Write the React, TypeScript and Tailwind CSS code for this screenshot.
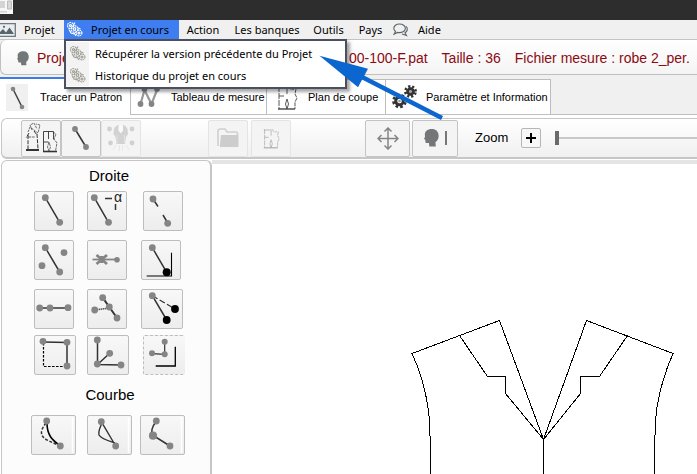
import type { ReactNode } from "react";
import { clsx } from "clsx";

const GREY = "#858585";

type Point = [number, number];

function Dots({ at, r = 3.4, fill = GREY }: { at: Point[]; r?: number; fill?: string }) {
  return (
    <>
      {at.map(([x, y]) => (
        <circle key={`${x}-${y}`} cx={x} cy={y} r={r} fill={fill} stroke="none" />
      ))}
    </>
  );
}

type Tool = {
  label: string;
  className: string;
  icon: ReactNode;
};

const LINE_TOOLS: Tool[][] = [
  [
    {
      label: "Droite par deux points",
      className: "w-10",
      icon: (
        <>
          <path d="M11.3 6.7 25.7 31.3" />
          <Dots at={[[11.3, 6.7], [25.7, 31.3]]} />
        </>
      ),
    },
    {
      label: "Droite avec angle",
      className: "w-10",
      icon: (
        <>
          <path d="M7.3 6.7 21.5 31.3M18 7.5h7M28.5 13v6" />
          <Dots at={[[7.3, 6.7], [21.5, 31.3]]} />
          <text x="27" y="11" fontSize="14" fill="#222" stroke="none" className="font-['Liberation_Sans',sans-serif]">
            α
          </text>
        </>
      ),
    },
    {
      label: "Droite interrompue",
      className: "ml-0.5 w-10",
      icon: (
        <>
          <path d="m10 8 5 7.5M20 24l4.7 8" />
          <Dots at={[[10, 8], [24.7, 32.3]]} />
        </>
      ),
    },
  ],
  [
    {
      label: "Parallèle",
      className: "w-10",
      icon: (
        <>
          <path d="M11.3 7.7 25.7 32" />
          <Dots at={[[11.3, 7.7], [25.7, 32], [30, 12.7], [8, 25.7]]} />
        </>
      ),
    },
    {
      label: "Supprimer un point",
      className: "w-10",
      icon: (
        <>
          <path d="M5.5 19.5H30" stroke={GREY} strokeWidth="1.8" />
          <path d="m9.5 15 10.5 9M9.5 24 20 15M14.7 16v7" stroke={GREY} strokeWidth="2.8" />
          <Dots at={[[30, 19.7]]} r={2.8} />
        </>
      ),
    },
    {
      label: "Perpendiculaire",
      className: "w-10",
      icon: (
        <>
          <path d="M11.3 7.7 25.7 32.3" />
          <path d="M30.5 12.7V36H5.7" stroke="#000" strokeWidth="1.1" />
          <Dots at={[[11.3, 7.7]]} />
          <Dots at={[[25.7, 32.3]]} r={4} fill="#000" />
        </>
      ),
    },
  ],
  [
    {
      label: "Point sur droite",
      className: "w-10",
      icon: (
        <>
          <path d="M5.7 19H34" />
          <Dots at={[[5.7, 19], [16, 19], [34, 18.7]]} />
        </>
      ),
    },
    {
      label: "Intersection",
      className: "w-10",
      icon: (
        <>
          <path d="m15.7 8.7 6.6 9.3L30 29" strokeWidth="2" />
          <path d="M7.7 21 22.3 19" strokeDasharray="1.2 0.8" />
          <Dots at={[[15.7, 8.7], [22.3, 18], [7.7, 21], [30, 29]]} />
        </>
      ),
    },
    {
      label: "Rotation",
      className: "w-[42px]",
      icon: (
        <>
          <path d="M11.3 6.7 25.7 31" />
          <path d="M11.3 6.7 34 20" strokeDasharray="6 2.5" strokeWidth="1.2" />
          <Dots at={[[11.3, 6.7]]} />
          <Dots at={[[25.7, 31], [34, 20]]} r={3.9} fill="#000" />
        </>
      ),
    },
  ],
  [
    {
      label: "Rectangle",
      className: "w-[42px]",
      icon: (
        <>
          <path d="m9 7 24 .5V31" />
          <path d="M9.5 8v23.5H33" stroke="#000" strokeWidth="1.2" strokeDasharray="2.6 1.4" />
          <Dots at={[[9, 6.3], [33, 7.3], [33, 31]]} />
        </>
      ),
    },
    {
      label: "Bissectrice",
      className: "w-[42px]",
      icon: (
        <>
          <path d="M10.5 5v24.5L34 30M10.5 29.5 22.7 18.3" />
          <Dots at={[[10.3, 5], [10.3, 29], [22.7, 18.3], [34, 30]]} />
        </>
      ),
    },
    {
      label: "Angle droit",
      className: "ml-0.5 w-[42px] border-dashed border-r-transparent",
      icon: (
        <>
          <path d="M21.7 6.7v12.6L9 18.7" strokeWidth="1.2" />
          <path d="M32.3 11.7V31H12.7" stroke="#000" strokeWidth="1.3" />
          <Dots at={[[9, 18.3], [21.7, 6.7], [21.7, 19.3]]} r={3} />
        </>
      ),
    },
  ],
];

const CURVE_TOOLS: Tool[] = [
  {
    label: "Modifier une courbe",
    className: "w-[45px]",
    icon: (
      <>
        <path d="M41.5 2v36" stroke="#fff" />
        <path d="M16 8c0 12 5 17 13 22.5" stroke="#000" strokeWidth="1.6" />
        <path d="M15 8c-7 9-5 13 0 16.5L29 31" strokeDasharray="3 1.6" />
        <Dots at={[[15.7, 6], [29.3, 31]]} />
      </>
    ),
  },
  {
    label: "Courbe par corde",
    className: "w-[45px]",
    icon: (
      <>
        <path d="M41.5 2v36" stroke="#fff" />
        <path d="m14.3 6.7 14.4 24.3M15 8c-2 5-4 8-3 12 2 4 10 6 16 8" strokeWidth="1.4" />
        <Dots at={[[14.3, 6.7], [28.7, 31]]} />
      </>
    ),
  },
  {
    label: "Courbe par trois points",
    className: "w-[45px]",
    icon: (
      <>
        <path d="M41.5 2v36" stroke="#fff" />
        <path d="M16.3 6c-5 7-5 10-4 14L30 31" />
        <Dots at={[[16.3, 6], [30, 31]]} />
        <Dots at={[[13, 20.7]]} r={4.1} />
      </>
    ),
  },
];

function ToolButton({ tool }: { tool: Tool }) {
  return (
    <button
      type="button"
      aria-label={tool.label}
      className={clsx(
        "flex h-10 items-start rounded-xs border border-[#bdbdbd] bg-linear-to-b from-[#f8f8f8] to-[#ededed]",
        tool.className,
      )}
    >
      <svg
        width="42"
        height="38"
        viewBox="1 1 42 38"
        fill="none"
        stroke="#333"
        strokeWidth="1.5"
        className="shrink-0 overflow-visible"
        aria-hidden
      >
        {tool.icon}
      </svg>
    </button>
  );
}

// chain of small linked rings used by the "Projet en cours" entries
function ChainIcon({ color }: { color: string }) {
  return (
    <svg width="17" height="17" viewBox="0 0 17 17" fill="none" stroke={color} strokeWidth="1.2" className="shrink-0" aria-hidden>
      <circle cx="4.5" cy="4.5" r="3" strokeDasharray="1.8 .7" />
      <circle cx="4.5" cy="4.5" r="1" />
      <circle cx="8.5" cy="8" r="3.4" strokeDasharray="2 .6" />
      <circle cx="8.5" cy="8" r="1.3" />
      <circle cx="13" cy="12" r="2.9" strokeDasharray="1.6 .7" />
      <circle cx="13" cy="12" r="1" />
      <path d="M9 1.5 7.5 4M3 8.5l2 3.5 3 1M8 12l2 3M12 7l2.5 1" />
    </svg>
  );
}

function PictureIcon() {
  return (
    <svg width="16" height="14" viewBox="0 0 16 14" className="shrink-0" aria-hidden>
      <path d="M0 .7h15.3v12.6H0" fill="#e9edf0" stroke="#6d777c" strokeWidth="1.3" />
      <path d="M0 11V9l3-3 3 3.5 3.5-5L14 11Z" fill="#56646b" />
      <circle cx="4" cy="3.8" r="1.1" fill="#56646b" />
    </svg>
  );
}

function ChatIcon() {
  return (
    <svg width="15" height="14" viewBox="0 0 15 14" fill="none" stroke="#59646b" strokeWidth="1.1" aria-hidden>
      <path d="M11.5 10c1.5-.5 2.8-2 2.8-4 0-1-.5-2-1.2-2.7M12 10l1.5 2.5L9 11" />
      <path
        d="M6.5 1C3.3 1 .8 2.9.8 5.3c0 1.3.7 2.4 1.7 3.2L1.2 11l3.5-1.6c3.9.8 7.7-1 7.7-4.1C12.4 2.9 9.7 1 6.5 1Z"
        fill="#f0f0f0"
      />
    </svg>
  );
}

function HeadIcon({ width, height }: { width: number; height: number }) {
  return (
    <svg width={width} height={height} viewBox="0 0 14 17" fill="#737779" className="shrink-0" aria-hidden>
      <path d="M7.5 0C3 0 .5 2.4.8 5.7L1 7.2 0 9.5l1.2.6.2 2.5c.5.8 1.8.7 3.2.5L5 16.5h6l-.3-4C13 10.8 14 8.5 13.6 5.5 13.2 2 11 0 7.500 0Z" />
    </svg>
  );
}

function SegmentIcon() {
  return (
    <svg width="22" height="27" viewBox="0 0 22 27" aria-hidden>
      <path d="M0 0h22v27H0Z" fill="#f0f0f0" />
      <path d="m7 5 9 18" stroke="#444" strokeWidth="1.5" />
      <Dots at={[[7, 5], [16, 23]]} r={2.3} />
    </svg>
  );
}

function ZigzagIcon() {
  return (
    <svg width="24" height="24" viewBox="0 0 24 24" fill="none" stroke="#999" strokeWidth="2.2" aria-hidden>
      <path d="M3.5 19 7.5 5l7 14L20 5" />
      <Dots at={[[3.5, 19], [7.5, 4], [14.5, 19], [20, 4]]} r={2.9} />
    </svg>
  );
}

function PieceIcon({ width, height, stroke }: { width: number; height: number; stroke: string }) {
  return (
    <svg width={width} height={height} viewBox="0 0 21 25" fill="none" stroke={stroke} aria-hidden>
      <path d="M2 1v23" strokeWidth=".9" strokeDasharray="6 1" />
      <path d="M1 24h17" strokeWidth="1.4" />
      <path d="M1 2h8M10 1v8M2 11h5" strokeWidth=".9" />
      <path d="M12 1c0 3 2 4 5 3M19 4l-1 5 2 4-2 4v7" strokeWidth=".9" strokeDasharray="4 .8" />
      <path d="m10 14-1.5 5 1.5 5 1.5-5Z" strokeWidth=".9" />
    </svg>
  );
}

function Gear({ x, y, r }: { x: number; y: number; r: number }) {
  return (
    <g transform={`translate(${x} ${y}) rotate(12)`}>
      <circle r={r} fill="none" stroke="#333" strokeWidth="2.8" strokeDasharray={`${r * 0.42} ${r * 0.365}`} />
      <circle r={r - 2.2} fill="none" stroke="#333" strokeWidth="3" />
      <circle r="1.3" fill="#999" />
    </g>
  );
}

function GearsIcon() {
  return (
    <svg width="26" height="24" viewBox="0 0 26 24" className="shrink-0" aria-hidden>
      <Gear x={7.5} y={16} r={6} />
      <Gear x={18.5} y={6.5} r={5} />
    </svg>
  );
}

function PatternsIcon() {
  return (
    <svg width="34" height="32" viewBox="0 0 34 32" fill="none" stroke="#333" aria-hidden>
      <path d="M4 10 6 5l4 3 4 3 2-8-4-1M8 8 6 3l4-2 3 6" strokeWidth=".7" strokeDasharray="2.5 .8" />
      <path d="M4 13v14M5 11l-3 5M13 12l1 15M10 9l3 4" strokeWidth="1" strokeDasharray="4 1.2" />
      <path d="M2 28h13" strokeWidth="2" />
      <path d="M19 29.5h14" strokeWidth="1.6" />
      <path d="M19.5 29V9.5h10v8M24.5 9v8M19.5 20h5" strokeWidth=".9" />
      <path d="m29 10 3 2-2 5 3 4-1.5 8M25 20l-1.5 5L25 29l1.5-4L25 20M4 15h7" strokeWidth=".7" strokeDasharray="3 .7" />
    </svg>
  );
}

function ToolbarSegmentIcon() {
  return (
    <svg width="24" height="28" viewBox="0 0 24 28" aria-hidden>
      <path d="m6 5 11 18" stroke="#333" strokeWidth="1.5" />
      <Dots at={[[6, 5], [17, 23]]} r={2.9} />
    </svg>
  );
}

function BodiceIcon() {
  return (
    <svg width="28" height="32" viewBox="0 0 28 32" fill="#d2d2d2" aria-hidden>
      <path d="M7 7q1-3 4-4h5.500q3 1 4 4l.5 5-2 3-1 7H9.500l-1-7-2-3Z" />
      <path d="M11.5 3.500q2.200-1.500 4.500 0v5l-2.200 3-2.300-3Z" fill="#fafafa" />
      <path d="M10 13v8M17.500 13v8" stroke="#e2e2e2" />
      <path d="m9 23-3 5M12.500 23v6M15.500 23v6M19 23l3 5" stroke="#e8e8e8" />
      <Dots at={[[2.5, 7], [25, 7], [3.5, 21], [25, 21]]} r={2.4} fill="#d0d0d0" />
    </svg>
  );
}

function FolderIcon() {
  return (
    <svg width="22" height="20" viewBox="0 0 22 20" aria-hidden>
      <path d="M1 18V3q0-2 2-2h5l2 3h9q1.5 0 1.5 1.5V7" fill="none" stroke="#cfcfcf" strokeWidth="1.6" />
      <path d="M4 7h17.5v12H4q-2 0-1-2Z" fill="#cdcdcd" />
    </svg>
  );
}

function MoveIcon() {
  return (
    <svg width="22" height="23" viewBox="0 0 22 23" fill="none" stroke="#858585" strokeWidth="1.5" aria-hidden>
      <path d="M11 1v21M1 11.5h20M7.5 4.5 11 1l3.5 3.5M7.5 18.5 11 22l3.5-3.5M4.5 8 1 11.5 4.5 15M17.5 8l3.5 3.5-3.5 3.5" />
    </svg>
  );
}

function MenuBar() {
  return (
    <nav className="flex h-5 items-stretch border-b border-[#c4c4c4] bg-[#f0f0f0] font-['Noto_Sans',sans-serif] text-[11px] leading-none text-black">
      <button type="button" className="flex w-16 items-center gap-2">
        <PictureIcon />
        Projet
      </button>
      <div className="relative z-10 flex w-[115px]">
        <button
          type="button"
          aria-haspopup="menu"
          aria-expanded
          className="flex w-full items-center gap-2 bg-[#3e7ef0] pl-0.5 whitespace-nowrap"
        >
          <ChainIcon color="#fff" />
          Projet en cours
        </button>
        <div
          role="menu"
          className="absolute top-full left-0 flex w-[283px] flex-col border-2 border-[#4b4f5e] bg-white pt-px pb-px shadow-[3px_3px_3px_rgba(0,0,0,0.35)]"
        >
          {["Récupérer la version précédente du Projet", "Historique du projet en cours"].map((label) => (
            <button key={label} type="button" role="menuitem" className="flex h-[22px] items-center whitespace-nowrap">
              <span className="mr-1.5 flex h-full w-[23px] items-center justify-center bg-[#f3f3f3]">
                <ChainIcon color="#a0a096" />
              </span>
              {label}
            </button>
          ))}
        </div>
      </div>
      <button type="button" className="w-12">Action</button>
      <button type="button" className="w-20">Les banques</button>
      <button type="button" className="w-[43px]">Outils</button>
      <button type="button" className="w-[41px]">Pays</button>
      <button type="button" className="ml-0.5 flex items-center gap-2.5">
        <ChatIcon />
        Aide
      </button>
    </nav>
  );
}

const TABS = [
  { label: "Tracer un Patron", icon: <SegmentIcon />, className: "w-[131px] pl-1.5 gap-3 border-r" },
  { label: "Tableau de mesure", icon: <ZigzagIcon />, className: "w-[136px] pl-1.5 gap-2.5 border-t border-r" },
  {
    label: "Plan de coupe",
    icon: <PieceIcon width={21} height={25} stroke="#444" />,
    className: "w-[119px] pl-2.5 gap-2.5 border-t border-r",
  },
  { label: "Paramètre et Information", icon: <GearsIcon />, className: "w-[165px] pl-1.5 gap-2 border-t border-r" },
];

function Tabs() {
  return (
    <div role="tablist" className="mt-0.5 flex h-[38px] items-end border-b border-[#c0c0c0]">
      {TABS.map((tab, idx) => (
        <button
          key={tab.label}
          type="button"
          role="tab"
          aria-selected={idx === 0}
          className={clsx(
            "flex items-center border-[#bdbdbd] bg-white text-[11px] whitespace-nowrap",
            idx === 0 ? "-mb-px h-[38px] border-t-2 border-t-[#3c7be0]" : "h-[35px]",
            tab.className,
          )}
        >
          {tab.icon}
          {tab.label}
        </button>
      ))}
    </div>
  );
}

function BarButton({
  label,
  faded,
  className,
  children,
}: {
  label: string;
  faded?: boolean;
  className?: string;
  children: ReactNode;
}) {
  return (
    <button
      type="button"
      aria-label={label}
      className={clsx(
        "flex h-[37px] shrink-0 items-center justify-center rounded-xs border bg-[#f4f4f4]",
        faded ? "border-[#e4e4e4]" : "border-[#c4c4c4]",
        className,
      )}
    >
      {children}
    </button>
  );
}

function Toolbar() {
  return (
    <div className="ml-px flex h-[41px] items-center rounded-l-md border border-r-0 border-b-2 border-[#c6c6c6] bg-linear-to-b from-white to-[#f0f0f0] pl-[19px]">
      <BarButton label="Patrons" className="w-10">
        <PatternsIcon />
      </BarButton>
      <BarButton label="Tracer" className="w-10">
        <ToolbarSegmentIcon />
      </BarButton>
      <BarButton label="Mannequin" faded className="w-10">
        <BodiceIcon />
      </BarButton>
      <BarButton label="Ouvrir" faded className="ml-[67px] w-10">
        <FolderIcon />
      </BarButton>
      <BarButton label="Pièce" faded className="ml-[3px] w-10">
        <PieceIcon width={17} height={25} stroke="#aaa" />
      </BarButton>
      <BarButton label="Déplacer" className="ml-[74px] w-[45px]">
        <MoveIcon />
      </BarButton>
      <BarButton label="Profil" className="ml-0.5 w-[46px] gap-1.5 bg-[#ebebeb]">
        <HeadIcon width={15} height={20} />
        <span className="h-3.5 w-0.5 bg-[#777]" />
      </BarButton>
      <label htmlFor="zoom" className="ml-[17px] w-[46px] text-[13px] leading-4 text-black">
        Zoom
      </label>
      <button
        type="button"
        aria-label="Agrandir"
        className="flex size-5 shrink-0 items-center justify-center rounded-xs border border-[#b5b5b5] bg-[#f7f7f7]"
      >
        <svg width="12" height="12" viewBox="0 0 12 12" stroke="#000" strokeWidth="2" aria-hidden>
          <path d="M6 1v10M1 6h10" />
        </svg>
      </button>
      <input
        id="zoom"
        type="range"
        defaultValue={0}
        className="ml-3.5 h-3.5 min-w-0 flex-1 appearance-none bg-transparent [&::-webkit-slider-runnable-track]:h-0.5 [&::-webkit-slider-runnable-track]:bg-[#c8c8c8] [&::-webkit-slider-thumb]:-mt-1.5 [&::-webkit-slider-thumb]:h-3.5 [&::-webkit-slider-thumb]:w-1 [&::-webkit-slider-thumb]:appearance-none [&::-webkit-slider-thumb]:bg-[#6a6a6a]"
      />
    </div>
  );
}

function ToolPanel() {
  return (
    <aside className="ml-px w-[211px] shrink-0 rounded-t-md border border-r-2 border-b-0 border-[#c6c6c6] bg-[#fcfcfc]">
      <h2 className="mt-[5px] pl-1.5 text-center text-[15px] leading-5">Droite</h2>
      <div className="mt-[5px] flex flex-col gap-[9px] pl-8">
        {LINE_TOOLS.slice(0, 3).map((row) => (
          <div key={row[0].label} className="grid grid-cols-[53px_54px_44px]">
            {row.map((tool) => (
              <ToolButton key={tool.label} tool={tool} />
            ))}
          </div>
        ))}
      </div>
      <div className="mt-1.5 grid grid-cols-[53px_54px_44px] pl-8">
        {LINE_TOOLS[3].map((tool) => (
          <ToolButton key={tool.label} tool={tool} />
        ))}
      </div>
      <h2 className="mt-2.5 pl-2 text-center text-[15px] leading-5">Courbe</h2>
      <div className="mt-2.5 grid grid-cols-[56px_53px_45px] pl-[29px]">
        {CURVE_TOOLS.map((tool) => (
          <ToolButton key={tool.label} tool={tool} />
        ))}
      </div>
    </aside>
  );
}

function PatternCanvas() {
  return (
    <section className="min-w-0 flex-1 overflow-hidden border-t-4 border-[#e4e4e4] bg-white">
      <svg
        width="485"
        height="310"
        viewBox="212 164 485 310"
        fill="none"
        stroke="#000"
        shapeRendering="crispEdges"
        role="img"
        aria-label="Patron"
      >
        <path d="M543.5 474v-34.5L499.5 320.5l-87.5 33c8 17 13 33 16 54q2.5 15 2.5 66.5" />
        <path d="M459.5 335.5l28 41h18v17l38 46" />
        <path d="M543.5 439.5 586.5 320.5l86.5 33c-7 16-13 34-16 54q-2.5 15-2.5 66.5" />
        <path d="M627.5 335.5l-28 41h-19v17l-37 46" />
      </svg>
    </section>
  );
}

function Pointer() {
  return (
    <svg
      className="pointer-events-none absolute top-[54px] left-[318px] z-20"
      width="126"
      height="67"
      viewBox="318 54 126 67"
      aria-hidden
    >
      <path d="M362 77 442 118" stroke="#0b66d0" strokeWidth="4.5" />
      <path d="m319.5 55.7 48.5 13-10 18.6Z" fill="#0b66d0" />
    </svg>
  );
}

export default function App() {
  return (
    <div className="relative flex h-screen flex-col overflow-hidden bg-[#f0f0f0] font-['Liberation_Sans',Arial,sans-serif] text-black">
      <header className="h-5 shrink-0 bg-[#2d2d2d]">
        <svg width="13" height="14" viewBox="0 0 13 14" aria-hidden>
          <path d="M0 0h13v14H0Z" fill="#f7f7f7" />
          <path d="M0 1h5v7H0ZM0 11h7v1.5H0Z" fill="#d4d4d4" />
          <path d="M7.5 1h4v8h-4Z" fill="#d8d8d8" stroke="#bbb" />
        </svg>
      </header>
      <MenuBar />
      <div className="flex h-[35px] shrink-0 items-center rounded-l-md border border-t-0 border-r-0 border-[#c0c0c0] bg-linear-to-b from-white to-[#f4f4f4] pt-0.5 pl-4 text-sm whitespace-nowrap text-[#8c0a12]">
        <HeadIcon width={12} height={15} />
        <span className="ml-2 w-[312px] shrink-0">Projet</span>
        <div className="flex gap-3.5">
          <span>00-100-F.pat</span>
          <span>Taille : 36</span>
          <span>Fichier mesure : robe 2_per.</span>
        </div>
      </div>
      <Tabs />
      <main className="flex min-h-0 flex-1 flex-col bg-white pt-[3px]">
        <Toolbar />
        <div className="flex min-h-0 flex-1 pt-px">
          <ToolPanel />
          <PatternCanvas />
        </div>
      </main>
      <Pointer />
    </div>
  );
}
